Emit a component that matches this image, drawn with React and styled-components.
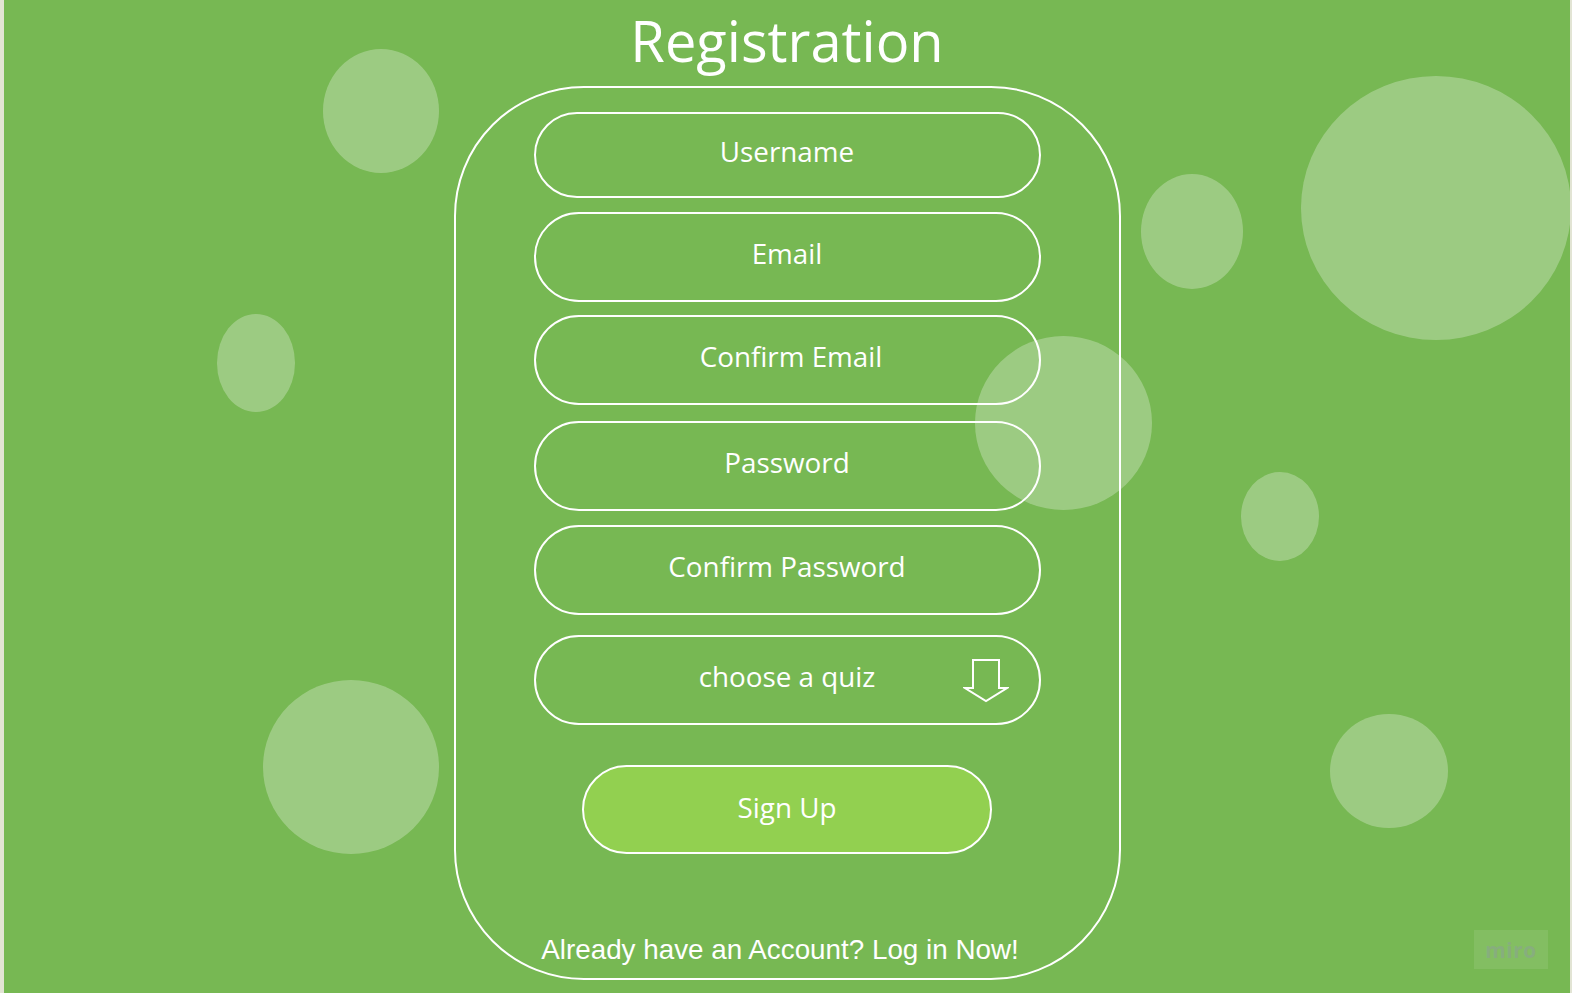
import React from "react";
import styled, { createGlobalStyle } from "styled-components";

const Global = createGlobalStyle`
  html, body { margin: 0; padding: 0; background: #e2e4d4; }
  body { font-family: "Open Sans", "Noto Sans", sans-serif; }
`;

const Stage = styled.div`
  position: relative;
  margin-left: 4px;
  width: 1566px;
  height: 993px;
  background: #77b853;
  overflow: hidden;
  display: flex;
  flex-direction: column;
  align-items: center;
`;

const Title = styled.h1`
  margin: 0;
  height: 86px;
  box-sizing: border-box;
  padding-top: 2px;
  font-family: "Open Sans", sans-serif;
  font-weight: 400;
  font-size: 56px;
  line-height: 76px;
  color: #fff;
`;

const Frame = styled.div`
  box-sizing: border-box;
  width: 667px;
  height: 894px;
  border: 2px solid #fff;
  border-radius: 130px;
  padding-top: 24px;
  display: flex;
  flex-direction: column;
  align-items: center;
`;

const Field = styled.div`
  position: relative;
  box-sizing: border-box;
  width: 507px;
  height: ${(p) => p.$h || 90}px;
  margin-top: ${(p) => p.$gap || 0}px;
  border: 2.5px solid #fff;
  border-radius: 46px;
  display: flex;
  align-items: center;
  justify-content: center;
  color: #fff;
  font-family: "Open Sans", sans-serif;
  font-size: 27.8px;
  padding-bottom: 8px;
  padding-left: ${(p) => (p.$shift || 0) * 2}px;
`;

const SignUp = styled.button`
  box-sizing: border-box;
  width: 410px;
  height: 89px;
  margin-top: 40px;
  border: 2.5px solid #fff;
  border-radius: 45px;
  background: #92d050;
  color: #fff;
  font-family: "Open Sans", sans-serif;
  font-size: 27.8px;
  padding-bottom: 6px;
  cursor: pointer;
`;

const Footer = styled.div`
  margin-top: auto;
  margin-bottom: 12px;
  padding-right: 14px;
  color: #fff;
  font-family: "Liberation Sans", Arial, sans-serif;
  font-size: 27.8px;
  line-height: 32px;
`;

const Arrow = styled.svg`
  position: absolute;
  right: 30px;
  top: 21px;
  width: 46px;
  height: 45px;
`;

const Bubble = styled.div`
  position: absolute;
  border-radius: 50%;
  background: rgba(255, 255, 255, 0.28);
  pointer-events: none;
`;

const Watermark = styled.div`
  position: absolute;
  left: 1470px;
  top: 930px;
  width: 74px;
  height: 39px;
  background: rgba(255, 255, 255, 0.09);
  display: flex;
  align-items: center;
  justify-content: center;
  font-family: "Open Sans", sans-serif;
  font-weight: 700;
  font-size: 21px;
  color: rgba(140, 160, 150, 0.55);
  letter-spacing: 0.5px;
`;

const bubbles = [
  [323, 49, 116, 124],
  [217, 314, 78, 98],
  [263, 680, 176, 174],
  [1141, 174, 102, 115],
  [1301, 76, 270, 264],
  [975, 336, 177, 174],
  [1241, 472, 78, 89],
  [1330, 714, 118, 114],
];

const fields = [
  { label: "Username", h: 86, gap: 0 },
  { label: "Email", h: 90, gap: 14 },
  { label: "Confirm Email", h: 90, gap: 13, shift: 4 },
  { label: "Password", h: 90, gap: 16 },
  { label: "Confirm Password", h: 90, gap: 14 },
];

export default function App() {
  return (
    <>
      <Global />
      <Stage>
        <Title>Registration</Title>
        <Frame>
          {fields.map((f) => (
            <Field key={f.label} $h={f.h} $gap={f.gap} $shift={f.shift}>
              {f.label}
            </Field>
          ))}
          <Field $h={90} $gap={20}>
            choose a quiz
            <Arrow viewBox="0 0 46 45">
              <polygon
                points="10,2 36,2 36,30 44,30 23,43 2,30 10,30"
                fill="none"
                stroke="#fff"
                strokeWidth="2"
                strokeLinejoin="miter"
              />
            </Arrow>
          </Field>
          <SignUp>Sign Up</SignUp>
          <Footer>Already have an Account? Log in Now!</Footer>
        </Frame>
        {bubbles.map(([x, y, w, h], i) => (
          <Bubble
            key={i}
            style={{ left: x - 4, top: y, width: w, height: h }}
          />
        ))}
        <Watermark>miro</Watermark>
      </Stage>
    </>
  );
}
